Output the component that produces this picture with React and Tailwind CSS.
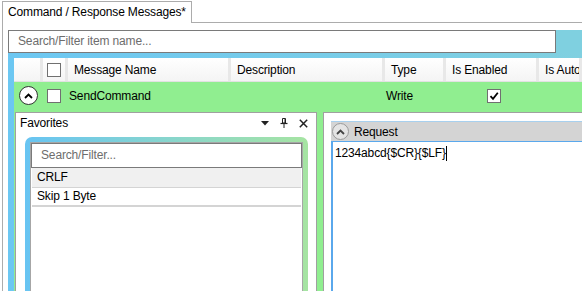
import React from 'react';

const headerCols = [
  { label: '', w: 'w-[29px]' },
  { label: 'box', w: 'w-[25px]' },
  { label: 'Message Name', w: 'w-[163px]' },
  { label: 'Description', w: 'w-[154px]' },
  { label: 'Type', w: 'w-[61px]' },
  { label: 'Is Enabled', w: 'w-[93px]' },
  { label: 'Is Auto', w: 'flex-1' },
];

function CheckBox({ checked }) {
  return (
    <div className="w-[14px] h-[14px] border border-[#707070] bg-white flex items-center justify-center">
      {checked && (
        <svg width="10" height="10" viewBox="0 0 10 10">
          <path d="M1.5 5.2 L4 7.8 L8.8 1.8" fill="none" stroke="#000" strokeWidth="1.8" />
        </svg>
      )}
    </div>
  );
}

function ExpandButton({ size = 19, light }) {
  return (
    <div
      className={`rounded-full flex items-center justify-center ${light ? 'bg-[#e4e4e4] border border-[#9a9a9a]' : 'bg-white border-[1.5px] border-[#333]'}`}
      style={{ width: size, height: size }}
    >
      <svg width="9" height="6" viewBox="0 0 9 6">
        <path d="M1 5 L4.5 1.5 L8 5" fill="none" stroke={light ? '#444' : '#000'} strokeWidth="1.8" />
      </svg>
    </div>
  );
}

export default function App() {
  return (
    <div className="w-[582px] h-[291px] overflow-hidden bg-white text-[12px] tracking-[-0.15px] text-[#1e1e1e] font-['Liberation_Sans',Arial,sans-serif]">
      {/* Tab strip */}
      <div className="flex h-[23px] pt-px pl-[2px]">
        <div className="w-[190px] h-[22px] border border-b-0 border-[#acacac] bg-white pl-[5px] leading-[20px] text-black">
          Command / Response Messages*
        </div>
        <div className="flex-1 border-b border-[#acacac]" />
      </div>

      {/* Frame */}
      <div className="ml-[2px] border-l border-[#acacac] h-[268px] flex flex-col">
        <div className="flex h-[23px] mt-[7px]">
          <div className="ml-[5px] w-[548px] h-[23px] border border-[#7a7a7a] bg-white pl-[9px] leading-[21px] text-[#6d6d6d]">
            Search/Filter item name...
          </div>
          <div className="flex-1 bg-[#7fd0e0]" />
        </div>

        {/* Grid */}
        <div className="flex-1 ml-[5px] bg-gradient-to-r from-[#6cc7f2] to-[#80d0e0] pl-[6px] pt-[5px] flex flex-col">
          {/* Header */}
          <div className="flex h-[24px] bg-gradient-to-b from-white to-[#f4f4f4] border-b border-[#e2e2e2]">
            {headerCols.map((c, i) => (
              <div key={i} className={`${c.w} h-full flex items-center border-r-[3px] border-[#e8e8e8] ${i === 1 ? 'justify-center' : 'pl-[6px]'} whitespace-nowrap overflow-hidden text-black`}>
                {c.label === 'box' ? <CheckBox /> : c.label}
              </div>
            ))}
          </div>

          {/* Green row */}
          <div className="flex h-[27px] bg-[#90ee90] items-center text-black">
            <div className="w-[29px] flex justify-center pr-[1px]">
              <ExpandButton />
            </div>
            <div className="w-[25px] flex justify-center pr-[3px]">
              <CheckBox />
            </div>
            <div className="w-[163px] pl-[1px]">SendCommand</div>
            <div className="w-[154px]" />
            <div className="w-[61px] pl-[1px]">Write</div>
            <div className="w-[93px] pl-[41px]">
              <CheckBox checked />
            </div>
          </div>

          {/* Row details */}
          <div className="flex-1 bg-[#90ee90] flex pt-[3px] pl-[1px] min-h-0">
            {/* Favorites */}
            <div className="w-[302px] border border-b-0 border-[#a0a0a0] bg-white flex flex-col">
              <div className="flex items-center h-[20px] pl-[4px] pr-[8px] text-black">
                <span className="flex-1">Favorites</span>
                <div className="flex items-center gap-[11px]">
                  <svg width="8" height="5" viewBox="0 0 8 5">
                    <path d="M0 0 H8 L4 4.5 Z" fill="#222" />
                  </svg>
                  <svg width="8" height="10" viewBox="0 0 8 10">
                    <path d="M2.5 0.5 H5.5 V5 H2.5 Z" fill="none" stroke="#222" strokeWidth="1" />
                    <path d="M5 1 V5" stroke="#222" strokeWidth="1" />
                    <path d="M0.5 5.5 H7.5" stroke="#222" strokeWidth="1.2" />
                    <path d="M4 6 V10" stroke="#222" strokeWidth="1" />
                  </svg>
                  <svg width="9" height="9" viewBox="0 0 9 9">
                    <path d="M0.8 0.8 L8.2 8.2 M8.2 0.8 L0.8 8.2" stroke="#222" strokeWidth="1.5" />
                  </svg>
                </div>
              </div>
              <div className="mt-[4px] ml-[9px] w-[283px] flex-1 rounded-t-[7px] bg-gradient-to-r from-[#68c4f2] to-[#a6e4a2] pt-[5px] px-[5px]">
                <div className="h-full bg-white border border-b-0 border-[#a6a6a6]">
                  <div className="h-[25px] border border-[#7a7a7a] pl-[9px] leading-[23px] text-[#6d6d6d]">
                    Search/Filter...
                  </div>
                  <div className="h-[20px] mx-px bg-[#f0f0f0] border-b border-[#d4d4d4] pl-[5px] leading-[19px] text-black">
                    CRLF
                  </div>
                  <div className="h-[19px] mx-px border-b-2 border-[#d4d4d4] pl-[5px] leading-[17px] text-black">
                    Skip 1 Byte
                  </div>
                </div>
              </div>
            </div>

            {/* Splitter */}
            <div className="w-[6px]" />

            {/* Request panel */}
            <div className="flex-1 border-l border-t border-[#a0a0a0] bg-white pl-[7px] pt-[8px] flex flex-col">
              <div className="flex-1 flex flex-col">
                <div className="h-[20px] bg-[#d4d4d4] border-t border-[#a8d0ee] flex items-center pl-[1px] text-black">
                  <ExpandButton size={17} light />
                  <span className="ml-[5px]">Request</span>
                </div>
                <div className="flex-1 border-l-2 border-t border-[#5aa8ec] pl-[2px] pt-[4px] text-black flex items-start">
                  <span className="leading-[15px]">1234abcd{'{$CR}{$LF}'}</span>
                  <span className="w-px h-[15px] bg-black" />
                </div>
              </div>
            </div>
          </div>
        </div>
      </div>
    </div>
  );
}
